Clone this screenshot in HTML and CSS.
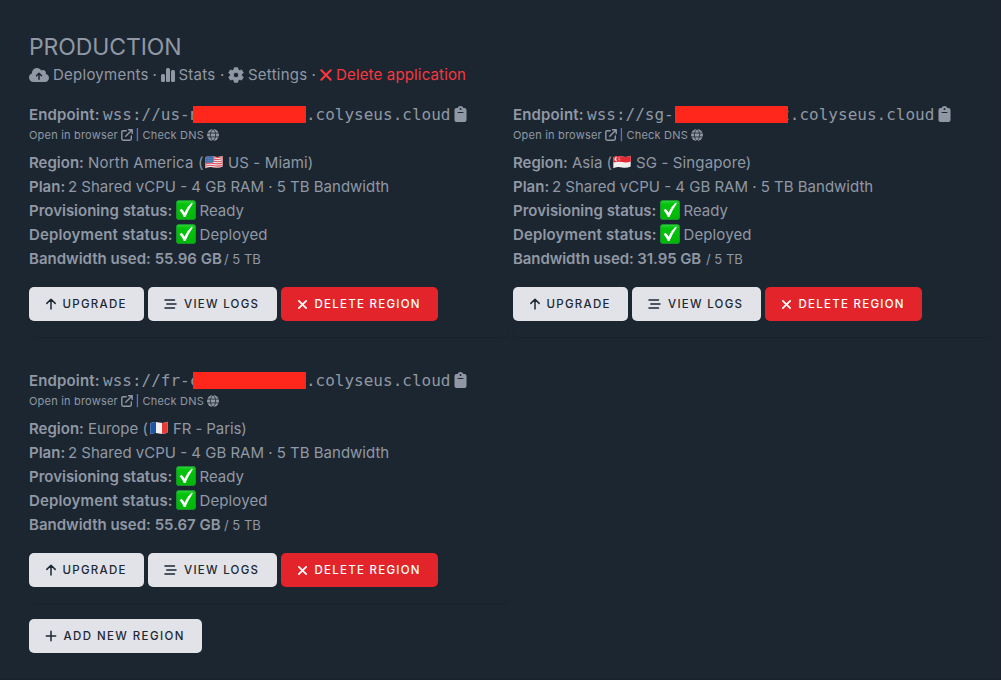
FILE: index.html
```
<!DOCTYPE html>
<html lang="en">
<head>
<meta charset="utf-8">
<title>Production</title>
<link rel="stylesheet" href="styles.css">
</head>
<body>
<svg class="defs" aria-hidden="true">
  <symbol id="cloud" viewBox="0 0 640 512"><path fill-rule="evenodd" d="M144 480C64 480 0 416 0 336c0-63 40-116 97-136 0-3-1-5-1-8C96 104 168 32 256 32c59 0 111 32 138 80 15-10 34-16 54-16 53 0 96 43 96 96 0 12-2 24-6 34 58 12 102 63 102 126 0 71-57 128-128 128zM223 263a24 24 0 0 0 34 34l39-39v134a24 24 0 0 0 48 0V258l39 39a24 24 0 0 0 34-34l-80-80a24 24 0 0 0-34 0z"/></symbol>
  <symbol id="bars" viewBox="0 0 448 512"><rect x="160" y="32" width="128" height="448" rx="48"/><rect x="0" y="224" width="128" height="256" rx="48"/><rect x="320" y="96" width="128" height="384" rx="48"/></symbol>
  <symbol id="gear" viewBox="0 0 24 24"><path fill-rule="evenodd" d="M9.5 1h5l.7 3.200 2 1.200 3.200-1 2.500 4.300-2.400 2.200v2.200l2.400 2.200-2.500 4.300-3.200-1-2 1.200-.7 3.200h-5l-.7-3.200-2-1.200-3.200 1-2.500-4.300 2.400-2.200v-2.200L1.100 8.700l2.500-4.300 3.200 1 2-1.200zM12 8a4 4 0 1 0 0 8 4 4 0 0 0 0-8z" stroke="currentColor" stroke-width="1.200" stroke-linejoin="round"/></symbol>
  <symbol id="cross" viewBox="0 0 12 12"><path d="M2 2l8 8M10 2l-8 8" fill="none" stroke="currentColor" stroke-width="1.900" stroke-linecap="round"/></symbol>
  <symbol id="clip" viewBox="0 0 384 512"><path fill-rule="evenodd" d="M192 0c-42 0-77 27-91 64H64C29 64 0 93 0 128v320c0 35 29 64 64 64h256c35 0 64-29 64-64V128c0-35-29-64-64-64h-37c-14-37-49-64-91-64zm0 64a32 32 0 1 1 0 64 32 32 0 0 1 0-64zM112 192h160a16 16 0 0 1 0 32H112a16 16 0 0 1 0-32z"/></symbol>
  <symbol id="open" viewBox="0 0 12 12"><path d="M5.200 1.700H2.200Q.8 1.700.8 3.100v6.700q0 1.400 1.400 1.400h6.700q1.400 0 1.400-1.400V6.900M7.500.8h3.700v3.700M11 1L4.700 7.300" fill="none" stroke="currentColor" stroke-width="1.400" stroke-linecap="round" stroke-linejoin="round"/></symbol>
  <symbol id="globe" viewBox="0 0 12 12"><circle cx="6" cy="6" r="6"/><path class="cut" d="M0 4.100h12M0 7.900h12M6 0C2.500 3 2.500 9 6 12M6 0c3.500 3 3.500 9 0 12" fill="none" stroke-width=".8"/></symbol>
  <symbol id="up" viewBox="0 0 12 12"><path d="M6 11V1.300M1.800 5.400L6 1.200l4.200 4.200" fill="none" stroke="currentColor" stroke-width="1.500" stroke-linecap="round" stroke-linejoin="round"/></symbol>
  <symbol id="logs" viewBox="0 0 13 10"><path d="M1 1h9.500M2.800 5h9.200M1 9h9.500" fill="none" stroke="currentColor" stroke-width="1.500" stroke-linecap="round"/></symbol>
  <symbol id="plus" viewBox="0 0 12 12"><path d="M6 1.300v9.400M1.300 6h9.400" fill="none" stroke="currentColor" stroke-width="1.500" stroke-linecap="round"/></symbol>
  <linearGradient id="green" x1="0" y1="0" x2="0" y2="1"><stop offset="0" stop-color="#2fd33c"/><stop offset=".2" stop-color="#03c40c"/><stop offset="1" stop-color="#02b40a"/></linearGradient>
  <symbol id="check" viewBox="0 0 20 20"><rect x=".4" y=".4" width="19.200" height="19.200" rx="2.600" fill="url(#green)" stroke="#1a9c32" stroke-width=".8"/><path d="M3.700 10.200l1.800-1.500q1.900 1.800 3 3.800 2.600-5.700 7.300-9.900l1 .8Q12.400 9.600 9.500 17H7.800q-1.400-3.600-4.100-6.800z" fill="#fff"/></symbol>
  <clipPath id="wave"><path d="M.3 2.200Q4.500.2 9 1.400T17.700.8V11.600Q13.500 13.500 9 12.400T.3 13.300z"/></clipPath>
  <symbol id="us" viewBox="0 0 18 14"><g clip-path="url(#wave)"><path fill="#f0e8eb" d="M0 0h18v14H0z"/><path d="M0 2.500Q4.500.8 9 1.900T18 1.300M0 4.700Q4.500 3 9 4.100T18 3.500M0 6.900Q4.500 5.200 9 6.300T18 5.700M0 9.100Q4.500 7.400 9 8.500T18 7.900M0 11.300Q4.500 9.600 9 10.700T18 10.100M0 13.500Q4.500 11.800 9 12.900T18 12.300" fill="none" stroke="#e0505c" stroke-width="1.150"/><path fill="#426da9" d="M0 0h8.500v7.400L0 8z"/><path d="M1.500 3.500h6M1.500 5.500h6" stroke="#8fabcf" stroke-width=".6" stroke-dasharray=".7 .8"/></g></symbol>
  <symbol id="sg" viewBox="0 0 18 14"><g clip-path="url(#wave)"><path fill="#f1eeee" d="M0 0h18v14H0z"/><path fill="#e52a36" d="M0 0h18v6.500q-4.500 1.500-9 .5T0 7.700z"/><path d="M4.200 2.300a2 2 0 1 0 0 3.800 2.300 2.300 0 0 1 0-3.800z" fill="#fff"/><path d="M5 3h2.500M4.900 4.800h3" stroke="#fff" stroke-width=".7" stroke-dasharray=".7 .6"/></g></symbol>
  <symbol id="fr" viewBox="0 0 18 14"><g clip-path="url(#wave)"><path fill="#f1eff1" d="M0 0h18v14H0z"/><path fill="#1d55a5" d="M0 0h6v14H0z"/><path fill="#e63c36" d="M12 0h6v14h-6z"/></g></symbol>
</svg>
<main class="page">
  <h1 class="title">PRODUCTION</h1>
  <nav class="links">
    <svg class="i-cloud"><use href="#cloud"/></svg><a class="t-dep">Deployments</a><i class="dot">·</i>
    <svg class="i-bars"><use href="#bars"/></svg><a class="t-stats">Stats</a><i class="dot">·</i>
    <svg class="i-gear"><use href="#gear"/></svg><a class="t-set">Settings</a><i class="dot">·</i>
    <span class="danger"><svg class="i-cross"><use href="#cross"/></svg><a>Delete application</a></span>
  </nav>
  <div class="grid">
    <section class="card">
      <div class="row endpoint"><b>Endpoint:</b><span class="mono">wss://us-n<span class="redact"></span>.colyseus.cloud</span><svg class="i-clip"><use href="#clip"/></svg></div>
      <div class="small"><a class="t-open">Open in browser</a><svg><use href="#open"/></svg><i>|</i><a class="t-dns">Check DNS</a><svg><use href="#globe"/></svg></div>
      <div class="row"><b class="k-region">Region:</b><span class="t-na">North America (</span><svg class="flag"><use href="#us"/></svg><span class="t-us">US - Miami)</span></div>
      <div class="row"><b class="k-plan">Plan:</b><span class="t-plan">2 Shared vCPU - 4 GB RAM · 5 TB Bandwidth</span></div>
      <div class="row"><b class="k-status">Provisioning status:</b><svg class="check"><use href="#check"/></svg><span>Ready</span></div>
      <div class="row"><b class="k-status k-deploy">Deployment status:</b><svg class="check"><use href="#check"/></svg><span class="t-ed">Deployed</span></div>
      <div class="row"><b class="k-band">Bandwidth used: 55.96 GB</b><span class="quota">/ 5 TB</span></div>
      <div class="actions"><button class="btn b-up"><svg><use href="#up"/></svg>UPGRADE</button><button class="btn b-logs"><svg><use href="#logs"/></svg>VIEW LOGS</button><button class="btn b-del"><svg><use href="#cross"/></svg>DELETE REGION</button></div>
    </section>
    <section class="card">
      <div class="row endpoint"><b>Endpoint:</b><span class="mono">wss://sg-<span class="redact wide"></span>t.colyseus.cloud</span><svg class="i-clip"><use href="#clip"/></svg></div>
      <div class="small"><a class="t-open">Open in browser</a><svg><use href="#open"/></svg><i>|</i><a class="t-dns">Check DNS</a><svg><use href="#globe"/></svg></div>
      <div class="row"><b class="k-region">Region:</b><span class="t-asia">Asia (</span><svg class="flag"><use href="#sg"/></svg><span class="t-sg">SG - Singapore)</span></div>
      <div class="row"><b class="k-plan">Plan:</b><span class="t-plan">2 Shared vCPU - 4 GB RAM · 5 TB Bandwidth</span></div>
      <div class="row"><b class="k-status">Provisioning status:</b><svg class="check"><use href="#check"/></svg><span>Ready</span></div>
      <div class="row"><b class="k-status k-deploy">Deployment status:</b><svg class="check"><use href="#check"/></svg><span class="t-ed">Deployed</span></div>
      <div class="row"><b class="k-band k-band-sg">Bandwidth used: 31.95 GB</b><span class="quota">/ 5 TB</span></div>
      <div class="actions"><button class="btn b-up"><svg><use href="#up"/></svg>UPGRADE</button><button class="btn b-logs"><svg><use href="#logs"/></svg>VIEW LOGS</button><button class="btn b-del"><svg><use href="#cross"/></svg>DELETE REGION</button></div>
    </section>
    <section class="card">
      <div class="row endpoint"><b>Endpoint:</b><span class="mono">wss://fr-c<span class="redact"></span>.colyseus.cloud</span><svg class="i-clip"><use href="#clip"/></svg></div>
      <div class="small"><a class="t-open">Open in browser</a><svg><use href="#open"/></svg><i>|</i><a class="t-dns">Check DNS</a><svg><use href="#globe"/></svg></div>
      <div class="row"><b class="k-region">Region:</b><span class="t-eu">Europe (</span><svg class="flag"><use href="#fr"/></svg><span class="t-fr">FR - Paris)</span></div>
      <div class="row"><b class="k-plan">Plan:</b><span class="t-plan">2 Shared vCPU - 4 GB RAM · 5 TB Bandwidth</span></div>
      <div class="row"><b class="k-status">Provisioning status:</b><svg class="check"><use href="#check"/></svg><span>Ready</span></div>
      <div class="row"><b class="k-status k-deploy">Deployment status:</b><svg class="check"><use href="#check"/></svg><span class="t-ed">Deployed</span></div>
      <div class="row"><b class="k-band">Bandwidth used: 55.67 GB</b><span class="quota">/ 5 TB</span></div>
      <div class="actions"><button class="btn b-up"><svg><use href="#up"/></svg>UPGRADE</button><button class="btn b-logs"><svg><use href="#logs"/></svg>VIEW LOGS</button><button class="btn b-del"><svg><use href="#cross"/></svg>DELETE REGION</button></div>
    </section>
  </div>
  <button class="btn b-add"><svg><use href="#plus"/></svg>ADD NEW REGION</button>
</main>
</body>
</html>
```
FILE: styles.css
```
* { box-sizing: border-box; }
body { margin: 0; background: #1c2630; color: #9098a5; font: 15px/24px Inter, "Liberation Sans", sans-serif; overflow: hidden; }
svg { fill: currentColor; flex: none; }
i { font-style: normal; }
b { font-weight: 600; flex: none; }
.defs { position: absolute; width: 0; height: 0; }
.page { height: 680px; padding: 31px 9px 0 29px; white-space: nowrap; border-bottom: 2px solid #19212a; border-right: 1px solid #19222d; }
.title { margin: 0; font-size: 23px; line-height: 32px; font-weight: 400; letter-spacing: -.1px; }
.links { display: flex; align-items: center; height: 24px; margin-bottom: 16px; letter-spacing: .25px; }
.i-cloud { width: 20px; height: 16px; margin-right: 4px; }
.i-bars { width: 14px; height: 16px; margin-right: 4px; }
.i-gear { width: 16px; height: 16px; margin-right: 4px; }
.t-dep { width: 96px; }
.t-stats { width: 38px; }
.t-set { width: 60px; }
.dot { width: 11.500px; text-align: center; }
.danger { display: flex; align-items: center; color: #f9373f; letter-spacing: .16px; }
.i-cross { width: 14px; height: 14px; margin-right: 3px; margin-left: -.5px; }
.grid { display: grid; grid-template-columns: 480px 480px; column-gap: 4px; row-gap: 32px; }
.card { height: 234px; border-radius: 6px; box-shadow: 0 1px 1px rgba(10, 18, 26, .15); }
.row { display: flex; align-items: center; height: 24px; }
.endpoint b { width: 74px; letter-spacing: .15px; }
.mono { font: 16px/24px "DejaVu Sans Mono", monospace; }
.redact { display: inline-block; position: relative; top: -1px; width: 113px; height: 17px; margin-left: -6.400px; background: #ff261c; vertical-align: middle; }
.redact.wide { margin-left: 1px; margin-right: -7.500px; }
.i-clip { width: 13px; height: 16px; margin-left: 3.500px; position: relative; top: -1px; }
.small { display: flex; align-items: center; height: 16px; margin-bottom: 8px; font-size: 11px; line-height: 16px; letter-spacing: .2px; }
.small svg { width: 12px; height: 12px; }
.small i { width: 10px; text-align: center; }
.t-open { width: 91.500px; }
.t-dns { width: 64.500px; }
.cut { stroke: #1c2630; }
.k-region { width: 59px; }
.k-plan { width: 39px; }
.k-status { width: 147px; }
.k-deploy { letter-spacing: .15px; }
.k-band { width: 195px; }
.k-band-sg { width: 193px; letter-spacing: -.08px; }
.t-na { width: 117px; letter-spacing: .2px; }
.t-us { letter-spacing: .12px; }
.t-asia { width: 41px; }
.t-eu { width: 62px; }
.t-sg { letter-spacing: .13px; }
.t-fr { letter-spacing: -.1px; }
.t-ed { letter-spacing: .12px; }
.flag { width: 18px; height: 14px; margin-right: 5px; position: relative; top: -1px; }
.check { width: 20px; height: 20px; margin-right: 3.500px; position: relative; top: -1px; }
.quota { font-size: 13px; }
.actions { display: flex; gap: 4px; margin-top: 16px; }
.btn { display: flex; align-items: center; height: 34px; padding: 0 0 0 16px; border: 0; border-radius: 5px; background: #e2e3e8; color: #1d2833; font: 550 11.500px/16px Inter, sans-serif; letter-spacing: 1.270px; white-space: nowrap; }
.btn svg { width: 12px; height: 12px; margin-right: 5.500px; }
.btn.b-up { width: 115px; }
.btn.b-logs { width: 129px; }
.b-logs svg { height: 10px; width: 13px; margin-right: 7px; }
.btn.b-del { width: 157px; background: #e3242b; color: #fff; }
.b-del svg { width: 11px; height: 11px; margin-right: 6.500px; }
.btn.b-add { width: 173px; margin-top: 16px; letter-spacing: 1.400px; }
.b-add svg { margin-right: 6.500px; }
```
